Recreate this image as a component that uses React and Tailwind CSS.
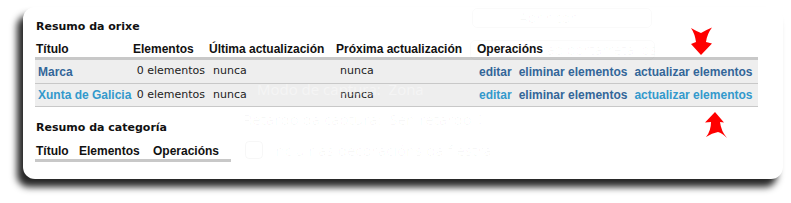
const dejavu = { fontFamily: '"DejaVu Sans", sans-serif' };

const DARK = 'text-[#336699]';
const LIGHT = 'text-[#3399cc]';

function Ghosts() {
  // faint dialog showing through the white card (screenshot artefact)
  return (
    <div className="pointer-events-none absolute inset-0 whitespace-nowrap font-['Open_Sans',sans-serif] text-[15px] leading-none text-black/[0.03]">
      <div className="absolute left-[472px] top-[8px] flex h-[20px] w-[180px] items-center rounded-[5px] border border-black/[0.02] pl-[46px] text-[14px]">
        Abrir con
      </div>
      <div className="absolute left-[470px] top-[40px] flex h-[20px] w-[185px] items-center rounded-[5px] border border-black/[0.02] pl-[76px] text-[14px]">
        ao portarretallos
      </div>
      <div className="absolute left-[257px] top-[82px] text-white/40">Modo de captura:&nbsp;&nbsp;Zona</div>
      <div className="absolute left-[243px] top-[112px]">Retardo da captura:&nbsp;&nbsp;Sen retardo ◊</div>
      <div className="absolute left-[245px] top-[141px] flex items-center gap-[8px]">
        <span className="h-[18px] w-[18px] rounded-[4px] border border-black/[0.03]" />
        Incluír as decoracións da fiestra
      </div>
    </div>
  );
}

function Arrows() {
  return (
    <>
      <svg className="absolute left-[688px] top-[25px]" width="28" height="34" viewBox="0 0 28 34">
        <path
          d="M3 3 Q8 6 13 8 Q18 5 24 2.5 Q19 9 18 17 L24 18.5 L13 30 L3 19 L8 17 Q7 9 3 3 Z"
          fill="#ff0000"
        />
      </svg>
      <svg className="absolute left-[703px] top-[109px]" width="28" height="34" viewBox="0 0 28 34">
        <path
          d="M12 3 L21 13.5 L17 13 Q18 22 24 29 Q19 24 15 23 Q9 24 3 28 Q8 22 8 13 L2 13.5 Z"
          fill="#ff0000"
        />
      </svg>
    </>
  );
}

const rows = [
  { title: 'Marca', titleColor: DARK, edit: DARK, update: DARK },
  { title: 'Xunta de Galicia', titleColor: LIGHT, edit: LIGHT, update: LIGHT },
];

export default function App() {
  return (
    <div className="relative h-[203px] w-[791px] overflow-hidden bg-white">
      <div className="ml-[23px] mt-[7px] h-[172px] w-[760px] whitespace-nowrap rounded-[12px] bg-white px-[12px] pt-[13px] shadow-[-6px_8px_7px_rgba(0,0,0,0.85)] font-['Liberation_Sans',Arial,sans-serif] text-[12px] text-[#111]">
        <h2 className="ml-[1px] text-[11px] font-bold leading-[14px]" style={dejavu}>
          Resumo da orixe
        </h2>

        {/* source table */}
        <div className="mt-[6px] w-[723px]">
          <div className="flex border-b-[3px] border-[#c8c8c8] pb-[1px] pt-[2px] font-bold leading-[14px]">
            <div className="w-[96px] pl-[1px]">Título</div>
            <div className="w-[76px] pl-[2px]">Elementos</div>
            <div className="w-[127px] pl-[2px]">Última actualización</div>
            <div className="w-[141px] pl-[2px]">Próxima actualización</div>
            <div className="flex-1 pl-[2px]">Operacións</div>
          </div>
          {rows.map((r, i) => (
            <div
              key={r.title}
              className={`flex items-center border-b border-[#c8c8c8] bg-[#eeeeee] ${i === 0 ? 'h-[24px]' : 'h-[23px]'}`}
            >
              <div className={`w-[96px] shrink-0 pl-[3px] font-bold ${r.titleColor}`}>{r.title}</div>
              <div className="w-[76px] shrink-0 pr-[2px] text-right text-[11px] text-[#222]" style={dejavu}>
                0 elementos
              </div>
              <div className="w-[127px] shrink-0 pl-[6px] text-[11px] text-[#222]" style={dejavu}>
                nunca
              </div>
              <div className="w-[141px] shrink-0 pl-[6px] text-[11px] text-[#222]" style={dejavu}>
                nunca
              </div>
              <div className="flex flex-1 gap-[7px] pl-[4px] font-bold">
                <span className={r.edit}>editar</span>
                <span className={DARK}>eliminar elementos</span>
                <span className={r.update}>actualizar elementos</span>
              </div>
            </div>
          ))}
        </div>

        <h2 className="ml-[1px] mt-[14px] text-[11px] font-bold leading-[14px]" style={dejavu}>
          Resumo da categoría
        </h2>

        {/* category table */}
        <div className="mt-[9px] flex w-[196px] border-b-[3px] border-[#c8c8c8] pb-[1px] font-bold leading-[14px]">
          <div className="w-[42px] pl-[1px]">Título</div>
          <div className="w-[74px] pl-[2px]">Elementos</div>
          <div className="flex-1 pl-[2px]">Operacións</div>
        </div>
      </div>

      <Ghosts />
      <Arrows />
    </div>
  );
}
